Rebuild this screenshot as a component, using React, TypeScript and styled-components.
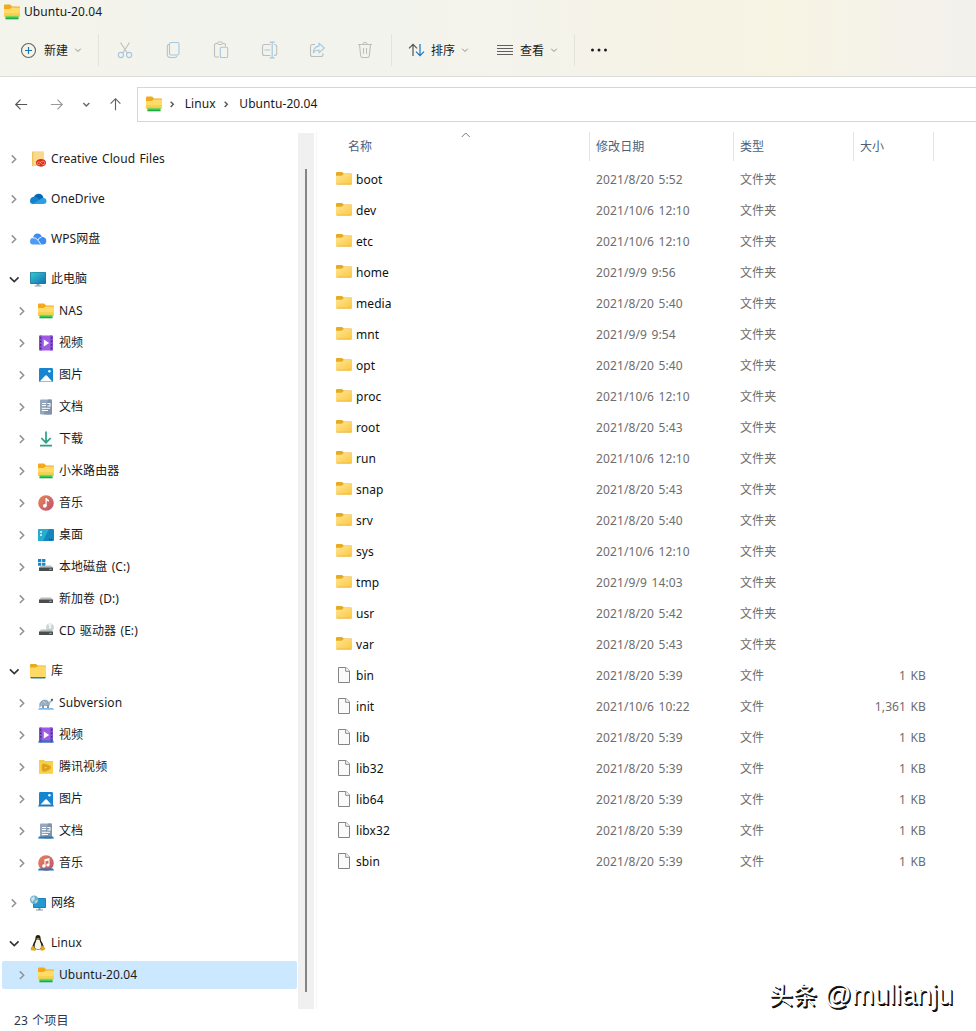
import React from 'react';
import styled, { createGlobalStyle } from 'styled-components';

const GlobalStyle = createGlobalStyle`
  *, *::before, *::after { box-sizing: border-box; }
  body {
    margin: 0;
    background: #fff;
    color: #1b1b1b;
    font-family: "Noto Sans", "Noto Sans CJK SC", sans-serif;
    font-size: 12px;
    line-height: 16px;
    word-spacing: 1.2px;
    letter-spacing: 0.07px;
    overflow: hidden;
  }
  svg { display: block; flex: none; }
`;

const Window = styled.div`
  position: relative;
  display: flex;
  flex-direction: column;
  width: 976px;
  height: 1031px;
  overflow: hidden;
`;

const Chrome = styled.header`
  height: 77px;
  flex: none;
  background: linear-gradient(90deg, #f3f4ec 0%, #f3f3ee 32%, #f4f3ec 52%, #f6f3e6 68%, #f7f4e4 80%, #f5f3e9 90%, #f3f1ec 100%);
  border-bottom: 1px solid #dcdcd8;
`;

const TitleBar = styled.div`
  display: flex;
  align-items: center;
  gap: 4px;
  height: 24px;
  padding-left: 4px;
`;

const Toolbar = styled.div`
  display: flex;
  align-items: center;
  height: 52px;
  padding-left: 20px;
`;

const ToolButton = styled.div<{ $width: number; $gap: number }>`
  display: flex;
  align-items: center;
  gap: ${(p) => p.$gap}px;
  width: ${(p) => p.$width}px;
  height: 32px;
`;

const ToolLabel = styled.span<{ $trim?: number }>`
  width: 25px;
  margin-top: 1px;
  margin-right: ${(p) => -(p.$trim ?? 0)}px;
  white-space: nowrap;
`;

const IconButton = styled.div`
  display: flex;
  align-items: center;
  justify-content: center;
  width: 48px;
  height: 32px;
`;

const ToolDivider = styled.div<{ $before?: number; $after: number }>`
  width: 1px;
  height: 32px;
  margin-left: ${(p) => p.$before ?? 0}px;
  margin-right: ${(p) => p.$after}px;
  background: #e4e4dd;
`;

const NavBar = styled.div`
  display: flex;
  align-items: center;
  height: 55px;
  padding-bottom: 1px;
  flex: none;
`;

const NavButtons = styled.div`
  display: grid;
  grid-template-columns: 34px 36px 24px 35px;
  align-items: center;
  justify-items: center;
  width: 137px;
  padding-left: 4px;
`;

const AddressBox = styled.div`
  display: flex;
  align-items: center;
  flex: 1;
  height: 35px;
  padding-left: 8px;
  border: 1px solid #d6d6d6;
  border-right: 0;
  color: #191919;
`;

const Crumb = styled.span<{ $width: number }>`
  width: ${(p) => p.$width}px;
  white-space: nowrap;
`;

const CrumbArrow = styled.span<{ $before: number; $after: number }>`
  margin-left: ${(p) => p.$before}px;
  margin-right: ${(p) => p.$after}px;
`;

const Main = styled.div`
  display: flex;
  flex: 1;
  min-height: 0;
`;

const Sidebar = styled.nav`
  display: flex;
  flex-direction: column;
  width: 298px;
  padding-top: 11px;
`;

const TreeRow = styled.div<{ $level: number; $gap?: boolean; $selected?: boolean }>`
  display: flex;
  align-items: center;
  flex: none;
  height: 28px;
  margin: ${(p) => (p.$gap ? 10 : 2)}px 1px 2px 2px;
  padding-left: ${(p) => 6 + p.$level * 8}px;
  border-radius: 2px;
  background: ${(p) => (p.$selected ? '#cce8ff' : 'transparent')};
`;

const TreeIcon = styled.span`
  width: 16px;
  margin: 0 5px 0 9.5px;
`;

const TreeLabel = styled.span`
  margin-top: -1px;
  white-space: nowrap;
`;

const ScrollTrack = styled.div`
  display: flex;
  justify-content: center;
  width: 16px;
  height: 876px;
  margin-top: 1px;
  padding: 36px 0 17px;
  background: #f0f0f0;
`;

const ScrollThumb = styled.div`
  width: 2px;
  background: #858585;
`;

const FilePane = styled.section`
  flex: 1;
  margin-left: 2px;
  border-left: 1px solid #f6f6f6;
`;

const HeaderRow = styled.div`
  display: grid;
  grid-template-columns: 273px 144px 120px 80px;
  height: 29px;
  margin-bottom: 3px;
`;

const HeaderCell = styled.div<{ $indent: number }>`
  display: flex;
  position: relative;
  align-items: center;
  padding-left: ${(p) => p.$indent}px;
  border-right: 1px solid #e4e4e4;
  color: #4c607a;
`;

const SortMark = styled.span`
  position: absolute;
  top: -3px;
  left: 143px;
`;

const FileRow = styled.div`
  display: grid;
  grid-template-columns: 16px 244px 144px 120px 66px;
  align-items: center;
  height: 31px;
  margin-left: 19px;

  > svg {
    margin-bottom: 1px;
  }
`;

const FileName = styled.span`
  padding-left: 4px;
  color: #111;
`;

const FileMeta = styled.span<{ $right?: boolean }>`
  color: #6d6d6d;
  letter-spacing: 0.12px;
  text-align: ${(p) => (p.$right ? 'right' : 'left')};
  white-space: nowrap;
`;

const StatusBar = styled.footer`
  display: flex;
  align-items: center;
  height: 22px;
  flex: none;
  padding: 2px 0 0 14px;
  color: #27384f;
`;

const Watermark = styled.div`
  display: flex;
  align-items: baseline;
  gap: 7px;
  position: absolute;
  left: 769px;
  top: 978px;
  color: #fff;
  font-size: 24px;
  line-height: 34px;
  letter-spacing: 0.1px;
  text-shadow: 1px 1px 0 #222, 1.6px 1.6px 0.5px #000;
  white-space: nowrap;
`;

const WatermarkHandle = styled.span`
  font-family: "Liberation Sans", sans-serif;
  font-size: 27px;
`;

const Chevron = ({ dir, color, size = 7, width = 1.3 }: { dir: 'right' | 'down' | 'up'; color: string; size?: number; width?: number }) => {
  const d = dir === 'right' ? 'M4 2.5 8 6.5 4 10.5' : dir === 'down' ? 'M2 4.5 6.5 9 11 4.5' : 'M2 9 6.5 4.5 11 9';
  const px = (size * 13) / 9;
  return (
    <svg width={px} height={px} viewBox="0 0 13 13" fill="none" stroke={color} strokeWidth={(width * 9) / size}>
      <path d={d} />
    </svg>
  );
};

const NetFolder = () => (
  <svg width="16" height="16" viewBox="0 0 16 16">
    <path d="M0 1.5Q0 .5 1 .5h5.2L8 2.5h7q1 0 1 1V6H0z" fill="#f2a91d" />
    <path d="M0 5h5.6l2-1.6H15q1 0 1 1V13H0z" fill="#ffdc68" />
    <path d="M0 9h16v3.5H0z" fill="#fbd052" />
    <path d="M1.5 12h13v3h-13z" fill="#3ccb50" />
    <path d="M1.5 14.2h13v1.1h-13z" fill="#1f9f4b" />
    <path d="M1.5 11.6h13v1h-13z" fill="#9be05c" />
  </svg>
);

const Folder = () => (
  <svg width="16" height="16" viewBox="0 0 16 16">
    <defs>
      <linearGradient id="folderFill" x1="0" y1="0" x2="1" y2="1">
        <stop offset="0" stopColor="#ffe596" />
        <stop offset="1" stopColor="#fbc83f" />
      </linearGradient>
    </defs>
    <path d="M0 2Q0 1 1 1h5l1.8 1.5H15q1 0 1 1V6H0z" fill="#e6ab1e" />
    <path d="M0 4.8h5.8L7.7 3.1H15q1 0 1 1v8.4q0 1-1 1H1q-1 0-1-1z" fill="url(#folderFill)" />
    <path d="M.5 13.2h15" stroke="#e8ac2c" strokeWidth=".7" />
  </svg>
);

const Library = () => (
  <svg width="16" height="16" viewBox="0 0 16 16">
    <path d="M0 2Q0 1 1 1h5l1.8 1.5H15q1 0 1 1V6H0z" fill="#e9ab1c" />
    <path d="M0 4.6h5.8L7.7 3.2H16V14H0z" fill="#fed966" />
    <path d="M0 14h16l-1 1.5H1z" fill="#337f9a" />
  </svg>
);

const FileIcon = () => (
  <svg width="16" height="16" viewBox="0 0 16 16" fill="#fafafa" stroke="#858585">
    <path d="M2.5.5h7.6l3.4 3.5v11.5h-11z" />
    <path d="M9.7.6V4.3h3.7" fill="#fff" />
  </svg>
);

const LibraryBase = () => <path d="M1 13.4h14l1 2.1H0z" fill="#2278b8" />;

const Video = ({ lib }: { lib?: boolean }) => (
  <svg width="16" height="16" viewBox="0 0 16 16">
    <rect x="1" y=".5" width="14" height="15" rx="1.2" fill="#a05be6" />
    <path d="M1 1.7A1.2 1.2 0 0 1 2.2.5H4v15H2.2A1.2 1.2 0 0 1 1 14.3zM12 .5h1.8A1.2 1.2 0 0 1 15 1.7v12.6a1.2 1.2 0 0 1-1.2 1.2H12z" fill="#8450d0" />
    <path d="M2.6 2.3v12M13.5 2.3v12" stroke="#382273" strokeWidth="1.3" strokeDasharray="1.3 2.2" />
    <path d="M5.8 4.5 11.2 8l-5.4 3.5z" fill="#fff" />
    {lib && <LibraryBase />}
  </svg>
);

const Picture = ({ lib }: { lib?: boolean }) => (
  <svg width="16" height="16" viewBox="0 0 16 16">
    <rect x="1" y="1" width="14" height="14" rx="1.2" fill="#1686d0" />
    <path d="M1.8 14.5 7 8.8q1-1 2 0l5.2 5.7z" fill="#fff" />
    <circle cx="11.4" cy="4.2" r="1.2" fill="#fff" />
    {lib && <LibraryBase />}
  </svg>
);

const Doc = ({ lib }: { lib?: boolean }) => (
  <svg width="16" height="16" viewBox="0 0 16 16">
    <rect x="2" y=".5" width="12" height="15" rx="1" fill="#94a7bc" />
    <path d="M10 .5h3q1 0 1 1v13q0 1-1 1H6z" fill="#8194ab" />
    <path d="M4 4.5h4M4 6.5h4M9.3 4.5h2.9M12 4.5v3M9.3 7h2.9M4 9.3h8M4 11.5h6" stroke="#fff" strokeWidth="1" />
    {lib && <LibraryBase />}
  </svg>
);

const Music = ({ lib }: { lib?: boolean }) => (
  <svg width="16" height="16" viewBox="0 0 16 16">
    <defs>
      <linearGradient id="musicFill" x1="0" y1="0" x2="1" y2="1">
        <stop offset="0" stopColor="#ea8558" />
        <stop offset="1" stopColor="#b95270" />
      </linearGradient>
    </defs>
    <circle cx="8" cy="8" r="7.8" fill="url(#musicFill)" />
    {lib ? (
      <g fill="#fff">
        <path d="M6.4 4.2 11.5 3v7h-1.1V5.5l-2.9.7v5H6.4z" />
        <circle cx="5.8" cy="11" r="1.7" />
        <circle cx="9.9" cy="10" r="1.6" />
      </g>
    ) : (
      <g fill="#fff">
        <path d="M7.5 3h1.2q.3 1.6 2.3 2v1.6q-1.4-.2-2.3-1V11H7.5z" />
        <circle cx="6.8" cy="10.8" r="1.9" />
      </g>
    )}
    {lib && <LibraryBase />}
  </svg>
);

const Monitor = () => (
  <svg width="16" height="16" viewBox="0 0 16 16">
    <defs>
      <linearGradient id="screenFill" x1="0" y1="0" x2="1" y2="1">
        <stop offset="0" stopColor="#31cbd2" />
        <stop offset="1" stopColor="#1670ae" />
      </linearGradient>
    </defs>
    <path d="M6.5 12h3v3h-3zM4.5 14.5h7v1h-7z" fill="#91a7b5" />
    <rect x="0" y="1" width="16" height="12" rx="1" fill="#237596" />
    <rect x=".7" y="1.6" width="14.6" height="10.7" rx=".4" fill="url(#screenFill)" />
  </svg>
);

const Network = () => (
  <svg width="17" height="16" viewBox="0 0 17 16">
    <path d="M8.5 12h2v3h-2zM6 14.5h7v1H6z" fill="#8098a7" />
    <rect x="3" y="3" width="13" height="10" rx="1" fill="#1c78b1" />
    <rect x="3.8" y="3.8" width="11.4" height="8.4" fill="#2499d0" />
    <circle cx="4.2" cy="4.7" r="4.2" fill="#74afcb" />
    <path d="M1 3.2 4 1l1 3-3 3zM5 6l3-1-2 3.4z" fill="#c6e2ec" />
  </svg>
);

const Download = () => (
  <svg width="16" height="16" viewBox="0 0 16 16" fill="none" stroke="#29a184" strokeWidth="1.7">
    <path d="M8 .5v11M3.3 7 8 11.7 12.7 7M2 14.6h12" />
  </svg>
);

const Desktop = () => (
  <svg width="16" height="16" viewBox="0 0 16 16">
    <rect x="0" y="2" width="16" height="12" rx="1" fill="#1687bd" />
    <path d="M0 3q0-1 1-1h10L5 14H1q-1 0-1-1z" fill="#27add0" />
    <path d="M2 5h2M2 8h2" stroke="#e6fbff" strokeWidth="1.3" />
    <path d="M11 12.5h4" stroke="#075684" strokeWidth="1.5" strokeDasharray="1.2 .8" />
  </svg>
);

const Drive = ({ kind }: { kind?: 'windows' | 'cd' }) => (
  <svg width="16" height="16" viewBox="0 0 16 16">
    {kind === 'cd' && (
      <g>
        <circle cx="12" cy="4.5" r="3.9" fill="#cbd5d3" />
        <path d="M12 4.5 10 1.2a3.9 3.9 0 0 1 4 .1z" fill="#eff4f1" />
        <circle cx="12" cy="4.5" r="1" fill="#fff" />
      </g>
    )}
    <path d="M3 6.5h10l2 2.2H1z" fill="#b9bcbd" />
    <rect x="1" y="8.5" width="14" height="3.5" rx=".3" fill="#4a4d50" />
    <path d="M11.5 10.3h2" stroke="#a8d4cc" />
    {kind === 'windows' && (
      <g>
        <path d="M0 0h7.8v7H0z" fill="#fff" />
        <path d="M0 0h3.3v3H0zM4.1 0h3.3v3H4.1zM0 3.7h3.3v3H0zM4.1 3.7h3.3v3H4.1z" fill="#1687c9" />
      </g>
    )}
  </svg>
);

const CreativeCloud = () => (
  <svg width="16" height="16" viewBox="0 0 16 16">
    <path d="M2 1q0-.7.7-.7h10.6q.7 0 .7.7v14H2z" fill="#fbd98a" />
    <path d="M2 1h1.3v14H2z" fill="#efc262" />
    <ellipse cx="11" cy="11.8" rx="5.1" ry="3.9" fill="#da2c1b" />
    <path d="M9.9 13.6q-2.8.5-2.7-1.4.5-2.2 2.5-1l3.1 2.5q2 .2 2-1.6-.5-2.8-3.1-1.7L9.6 12" fill="none" stroke="#ffc9a0" strokeWidth=".6" />
  </svg>
);

const OneDrive = () => (
  <svg width="17" height="16" viewBox="0 0 17 16">
    <path d="M3.5 7Q5 2.8 8.7 2.8T13.5 7L11 10z" fill="#0867b5" />
    <path d="M0 10q0-4 4.2-4.2Q6 5.8 8 7.2l5 5.8H3q-3 0-3-3z" fill="#1383d0" />
    <path d="M3 13 12 7q4.5-.5 4.5 3 0 3-3 3z" fill="#2a9fe4" />
  </svg>
);

const WpsCloud = () => (
  <svg width="17" height="16" viewBox="0 0 17 16">
    <path d="M3 7Q3.5 2.5 7.5 2.5q3 0 4.3 3.2Q16.3 6 16.3 10q0 3.5-3.5 3.5H10z" fill="#3e8bf2" />
    <path d="M0 10.5Q0 7 3.5 6.5 6.8 6.7 8 9.5l2.5 4H3q-3 0-3-3z" fill="#4f9af5" />
    <path d="M2.5 6.8Q6 6.2 8 9.2l3 4.3M8 9q.6-2.2 3.4-2.8" fill="none" stroke="#fff" strokeWidth=".9" />
  </svg>
);

const Subversion = () => (
  <svg width="16" height="16" viewBox="0 0 16 16">
    <path d="M1 9.5Q3 4.3 7.2 4.8 11 5 11.4 9.5L8 11H4z" fill="#8fa5bc" />
    <path d="M3.5 8.8 6 6l1 2.8L8.7 6.5" fill="none" stroke="#c9d6e0" strokeWidth=".7" />
    <path d="M10.5 8.5q1-3.3 3.4-3.7l.5 1.7-2 1-.7 3h-8L2 12.5.7 12 2 9.5z" fill="#9fb3c5" />
    <circle cx="14" cy="4.8" r="1.1" fill="#45515e" />
    <path d="M10 10v3M5 10.5V13" stroke="#8097ac" strokeWidth="2" />
    <path d="M1 13h14l1 1.8H0z" fill="#7ebbe8" />
  </svg>
);

const TencentVideo = () => (
  <svg width="16" height="16" viewBox="0 0 16 16">
    <path d="M1 1h5l1 1h8v12.5H1z" fill="#f5cb3f" />
    <path d="M1 3h14v11.5H1z" fill="#f9d04b" />
    <path d="M4 5.6q1-2 3.6-.7 5.4 1.4 5.6 3.5-.2 2.2-5.6 4Q5 13.4 4 11.5q-1-3 0-5.9z" fill="#dfa51d" />
    <path d="m6.2 6.7 4 1.9-4 2.2z" fill="#f8cc45" stroke="#c88d13" strokeWidth=".6" />
  </svg>
);

const Tux = () => (
  <svg width="16" height="16" viewBox="0 0 16 16">
    <path d="M5.4 3.2Q5.5 0 8 0t2.6 3.2q0 2.3 1.7 4.6 1.8 2.7 1 5.7-5.3 2-10.6 0-.7-3 1-5.7 1.8-2.5 1.7-4.6z" fill="#24211b" />
    <path d="M6.3 4.8h3.3q.2 2 1.4 4 1 2.5-.3 4.7-2.7 1.1-5.4 0Q4 11.4 5 8.8 6.4 6.5 6.3 4.8z" fill="#f6f5ee" />
    <path d="m6.2 3.7 1.8-.6 1.8.7L8 5z" fill="#e1a226" />
    <path d="m3.1 10.4 2.8 3.8q.3 1.6-1.5 1.6l-3.8-.9q.2-1 .4-2.3zM12.9 10.4l2.5 3.2-.5 1-2.7 1.2q-2 .1-1.7-1.6.4-1.5.2-2.7z" fill="#dba91f" />
  </svg>
);

type TreeItem = { label: string; icon: React.ReactNode; level: number; open?: boolean; gap?: boolean; selected?: boolean };

const tree: TreeItem[] = [
  { label: 'Creative Cloud Files', icon: <CreativeCloud />, level: 0 },
  { label: 'OneDrive', icon: <OneDrive />, level: 0, gap: true },
  { label: 'WPS网盘', icon: <WpsCloud />, level: 0, gap: true },
  { label: '此电脑', icon: <Monitor />, level: 0, gap: true, open: true },
  { label: 'NAS', icon: <NetFolder />, level: 1 },
  { label: '视频', icon: <Video />, level: 1 },
  { label: '图片', icon: <Picture />, level: 1 },
  { label: '文档', icon: <Doc />, level: 1 },
  { label: '下载', icon: <Download />, level: 1 },
  { label: '小米路由器', icon: <NetFolder />, level: 1 },
  { label: '音乐', icon: <Music />, level: 1 },
  { label: '桌面', icon: <Desktop />, level: 1 },
  { label: '本地磁盘 (C:)', icon: <Drive kind="windows" />, level: 1 },
  { label: '新加卷 (D:)', icon: <Drive />, level: 1 },
  { label: 'CD 驱动器 (E:)', icon: <Drive kind="cd" />, level: 1 },
  { label: '库', icon: <Library />, level: 0, gap: true, open: true },
  { label: 'Subversion', icon: <Subversion />, level: 1 },
  { label: '视频', icon: <Video lib />, level: 1 },
  { label: '腾讯视频', icon: <TencentVideo />, level: 1 },
  { label: '图片', icon: <Picture lib />, level: 1 },
  { label: '文档', icon: <Doc lib />, level: 1 },
  { label: '音乐', icon: <Music lib />, level: 1 },
  { label: '网络', icon: <Network />, level: 0, gap: true },
  { label: 'Linux', icon: <Tux />, level: 0, gap: true, open: true },
  { label: 'Ubuntu-20.04', icon: <NetFolder />, level: 1, selected: true },
];

const files: [string, string, string?][] = [
  ['boot', '2021/8/20 5:52'],
  ['dev', '2021/10/6 12:10'],
  ['etc', '2021/10/6 12:10'],
  ['home', '2021/9/9 9:56'],
  ['media', '2021/8/20 5:40'],
  ['mnt', '2021/9/9 9:54'],
  ['opt', '2021/8/20 5:40'],
  ['proc', '2021/10/6 12:10'],
  ['root', '2021/8/20 5:43'],
  ['run', '2021/10/6 12:10'],
  ['snap', '2021/8/20 5:43'],
  ['srv', '2021/8/20 5:40'],
  ['sys', '2021/10/6 12:10'],
  ['tmp', '2021/9/9 14:03'],
  ['usr', '2021/8/20 5:42'],
  ['var', '2021/8/20 5:43'],
  ['bin', '2021/8/20 5:39', '1 KB'],
  ['init', '2021/10/6 10:22', '1,361 KB'],
  ['lib', '2021/8/20 5:39', '1 KB'],
  ['lib32', '2021/8/20 5:39', '1 KB'],
  ['lib64', '2021/8/20 5:39', '1 KB'],
  ['libx32', '2021/8/20 5:39', '1 KB'],
  ['sbin', '2021/8/20 5:39', '1 KB'],
];

const PlusCircle = () => (
  <svg width="17" height="17" viewBox="0 0 17 17" fill="none">
    <circle cx="8.5" cy="8.5" r="7" stroke="#666" strokeWidth="1.1" />
    <path d="M8.5 5v7M5 8.5h7" stroke="#1976b8" strokeWidth="1.2" />
  </svg>
);

const disabledGrey = '#bdbfbc';
const disabledBlue = '#a4c8e0';

const Cut = () => (
  <svg width="16" height="18" viewBox="0 0 16 18" fill="none">
    <path d="M3.5 1.5 10.3 12M12.5 1.5 5.7 12" stroke={disabledGrey} strokeWidth="1.1" />
    <circle cx="3.9" cy="14" r="2.6" stroke={disabledBlue} strokeWidth="1.1" />
    <circle cx="12.1" cy="14" r="2.6" stroke={disabledBlue} strokeWidth="1.1" />
  </svg>
);

const Copy = () => (
  <svg width="16" height="18" viewBox="0 0 16 18" fill="none">
    <rect x="4.5" y="1.5" width="9.5" height="12.5" rx="1.6" stroke={disabledBlue} strokeWidth="1.1" />
    <path d="M4.3 3.3Q2.3 3.5 2.3 5.5v7.8q0 3.2 3.2 3.2h4.3q1.7 0 2-1.7" stroke={disabledGrey} strokeWidth="1.1" />
  </svg>
);

const Paste = () => (
  <svg width="16" height="18" viewBox="0 0 16 18" fill="none">
    <path d="M4.5 2.5H3Q1.5 2.5 1.5 4v10.5Q1.5 16 3 16h3M9.5 2.5H11q1.5 0 1.5 1.5v1.5" stroke={disabledGrey} strokeWidth="1.1" />
    <rect x="4.5" y="1" width="5" height="2.5" rx="1.2" stroke={disabledGrey} strokeWidth="1" />
    <rect x="7.3" y="6.2" width="7.4" height="10.3" rx="1.3" stroke={disabledBlue} strokeWidth="1.1" />
  </svg>
);

const Rename = () => (
  <svg width="17" height="18" viewBox="0 0 17 18" fill="none">
    <path d="M9.5 3.5h-6q-2 0-2 2v7q0 2 2 2h6M13 3.5q2.7 0 2.7 2v7q0 2-2.7 2" stroke={disabledGrey} strokeWidth="1.1" />
    <path d="M8.7 1.2h5M8.7 16.8h5M11.2 1.2v15.6M3.5 9h5.7" stroke={disabledBlue} strokeWidth="1.2" />
  </svg>
);

const Share = () => (
  <svg width="17" height="18" viewBox="0 0 17 18" fill="none">
    <path d="M6 3.5H3.5q-2 0-2 2v8q0 2 2 2H12q2 0 2-2v-1.2" stroke={disabledGrey} strokeWidth="1.1" />
    <path d="M10 2.2 15.3 7 10 11.8V9q-3.7 0-5.7 2.7Q5 5.4 10 5.1z" stroke={disabledBlue} strokeWidth="1.1" strokeLinejoin="round" />
  </svg>
);

const Trash = () => (
  <svg width="16" height="18" viewBox="0 0 16 18" fill="none" stroke={disabledGrey} strokeWidth="1.1">
    <path d="M1 3.5h14M5.8 3.3Q6 1.2 8 1.2t2.2 2.1M2.5 3.7l1.2 11q.2 1.8 1.8 1.8h5q1.6 0 1.8-1.8l1.2-11M6.5 7v5.7M9.5 7v5.7" />
  </svg>
);

const Sort = () => (
  <svg width="17" height="14" viewBox="0 0 17 14" fill="none" strokeWidth="1.2">
    <path d="M5 13V1.5M1 5.3 5 1.3l4 4" stroke="#555" />
    <path d="M12 1v11.5M8 8.7l4 4 4-4" stroke="#1976c0" />
  </svg>
);

const Lines = () => (
  <svg width="16" height="10" viewBox="0 0 16 10" stroke="#606060">
    <path d="M0 .5h16M0 3.5h16M0 6.5h16M0 9.5h16" />
  </svg>
);

const More = () => (
  <svg width="18" height="4" viewBox="0 0 18 4" fill="#1d1d1d">
    <circle cx="2.5" cy="2" r="1.5" />
    <circle cx="9" cy="2" r="1.5" />
    <circle cx="15.5" cy="2" r="1.5" />
  </svg>
);

const Arrow = ({ dir, color }: { dir: 'left' | 'right' | 'up'; color: string }) => {
  const paths = {
    left: 'M14 8H2M7 2.8 1.8 8 7 13.2',
    right: 'M2 8h12M9 2.8 14.2 8 9 13.2',
    up: 'M8 14V2M2.8 7 8 1.8 13.2 7',
  };
  return (
    <svg width="15" height="15" viewBox="0 0 16 16" fill="none" stroke={color} strokeWidth="1.2">
      <path d={paths[dir]} />
    </svg>
  );
};

export default function App() {
  return (
    <Window>
      <GlobalStyle />
      <Chrome>
        <TitleBar>
          <NetFolder />
          <span>Ubuntu-20.04</span>
        </TitleBar>
        <Toolbar>
          <ToolButton $width={78} $gap={7}>
            <PlusCircle />
            <ToolLabel $trim={2}>新建</ToolLabel>
            <Chevron dir="down" color="#8c8c88" size={5.5} width={1} />
          </ToolButton>
          <ToolDivider $after={2} />
          {[<Cut />, <Copy />, <Paste />, <Rename />, <Share />, <Trash />].map((icon, i) => (
            <IconButton key={i}>{icon}</IconButton>
          ))}
          <ToolDivider $before={2} $after={16} />
          <ToolButton $width={89} $gap={6}>
            <Sort />
            <ToolLabel $trim={1}>排序</ToolLabel>
            <Chevron dir="down" color="#8c8c88" size={5.5} width={1} />
          </ToolButton>
          <ToolButton $width={77} $gap={7}>
            <Lines />
            <ToolLabel $trim={2}>查看</ToolLabel>
            <Chevron dir="down" color="#8c8c88" size={5.5} width={1} />
          </ToolButton>
          <ToolDivider $after={0} />
          <IconButton>
            <More />
          </IconButton>
        </Toolbar>
      </Chrome>
      <NavBar>
        <NavButtons>
          <Arrow dir="left" color="#555" />
          <Arrow dir="right" color="#9a9a9a" />
          <Chevron dir="down" color="#666" size={6} width={1.4} />
          <Arrow dir="up" color="#606060" />
        </NavButtons>
        <AddressBox>
          <NetFolder />
          <CrumbArrow $before={6} $after={8}>
            <Chevron dir="right" color="#555" size={6} width={1.4} />
          </CrumbArrow>
          <Crumb $width={30}>Linux</Crumb>
          <CrumbArrow $before={7} $after={9}>
            <Chevron dir="right" color="#555" size={6} width={1.4} />
          </CrumbArrow>
          <Crumb $width={80}>Ubuntu-20.04</Crumb>
        </AddressBox>
      </NavBar>
      <Main>
        <Sidebar>
          {tree.map((item, i) => (
            <TreeRow key={i} $level={item.level} $gap={item.gap} $selected={item.selected}>
              {item.open ? (
                <Chevron dir="down" color="#333" size={8.65} width={1.6} />
              ) : (
                <Chevron dir="right" color="#929292" size={8.65} width={1.5} />
              )}
              <TreeIcon>{item.icon}</TreeIcon>
              <TreeLabel>{item.label}</TreeLabel>
            </TreeRow>
          ))}
        </Sidebar>
        <ScrollTrack>
          <ScrollThumb />
        </ScrollTrack>
        <FilePane>
          <HeaderRow>
            <HeaderCell $indent={31}>
              名称
              <SortMark>
                <Chevron dir="up" color="#777" size={8} width={1} />
              </SortMark>
            </HeaderCell>
            <HeaderCell $indent={6}>修改日期</HeaderCell>
            <HeaderCell $indent={6}>类型</HeaderCell>
            <HeaderCell $indent={6}>大小</HeaderCell>
          </HeaderRow>
          {files.map(([name, date, size]) => (
            <FileRow key={name}>
              {size ? <FileIcon /> : <Folder />}
              <FileName>{name}</FileName>
              <FileMeta>{date}</FileMeta>
              <FileMeta>{size ? '文件' : '文件夹'}</FileMeta>
              <FileMeta $right>{size}</FileMeta>
            </FileRow>
          ))}
        </FilePane>
      </Main>
      <StatusBar>23 个项目</StatusBar>
      <Watermark>
        <span>头条</span>
        <WatermarkHandle>@mulianju</WatermarkHandle>
      </Watermark>
    </Window>
  );
}
